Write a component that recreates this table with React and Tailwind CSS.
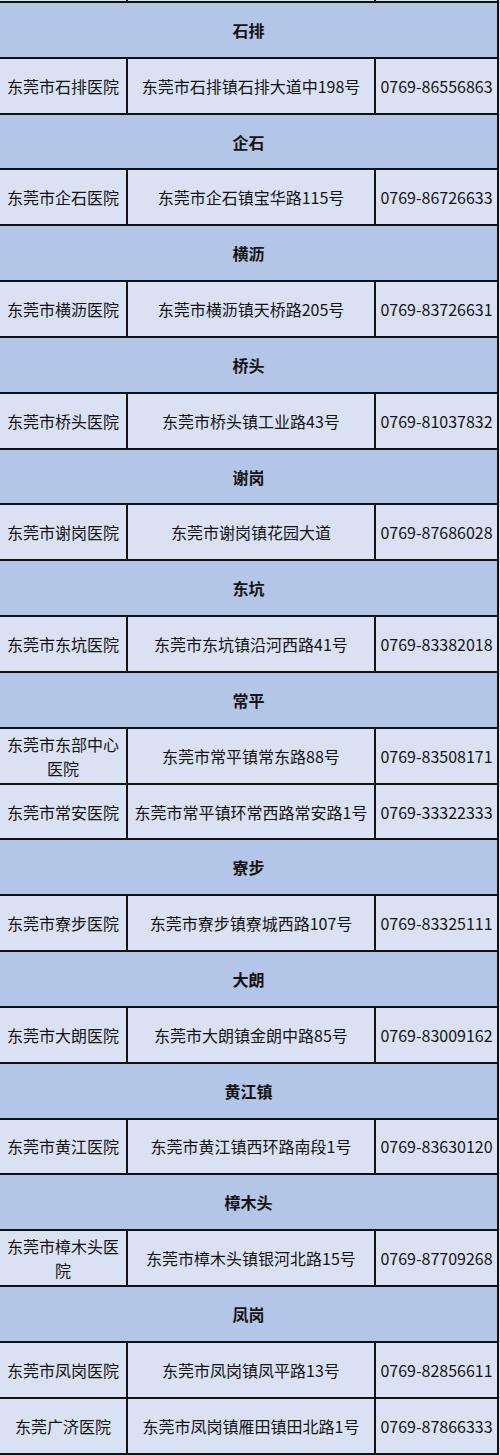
const groups = [
  { town: '石排', rows: [['东莞市石排医院', '东莞市石排镇石排大道中198号', '0769-86556863']] },
  { town: '企石', rows: [['东莞市企石医院', '东莞市企石镇宝华路115号', '0769-86726633']] },
  { town: '横沥', rows: [['东莞市横沥医院', '东莞市横沥镇天桥路205号', '0769-83726631']] },
  { town: '桥头', rows: [['东莞市桥头医院', '东莞市桥头镇工业路43号', '0769-81037832']] },
  { town: '谢岗', rows: [['东莞市谢岗医院', '东莞市谢岗镇花园大道', '0769-87686028']] },
  { town: '东坑', rows: [['东莞市东坑医院', '东莞市东坑镇沿河西路41号', '0769-83382018']] },
  {
    town: '常平',
    rows: [
      ['东莞市东部中心医院', '东莞市常平镇常东路88号', '0769-83508171'],
      ['东莞市常安医院', '东莞市常平镇环常西路常安路1号', '0769-33322333'],
    ],
  },
  { town: '寮步', rows: [['东莞市寮步医院', '东莞市寮步镇寮城西路107号', '0769-83325111']] },
  { town: '大朗', rows: [['东莞市大朗医院', '东莞市大朗镇金朗中路85号', '0769-83009162']] },
  { town: '黄江镇', rows: [['东莞市黄江医院', '东莞市黄江镇西环路南段1号', '0769-83630120']] },
  { town: '樟木头', rows: [['东莞市樟木头医院', '东莞市樟木头镇银河北路15号', '0769-87709268']] },
  {
    town: '凤岗',
    rows: [
      ['东莞市凤岗医院', '东莞市凤岗镇凤平路13号', '0769-82856611'],
      ['东莞广济医院', '东莞市凤岗镇雁田镇田北路1号', '0769-87866333'],
    ],
  },
];

const cell = 'flex items-center justify-center text-center px-1 border-r-2 border-[#111]';

function Row({ row }) {
  return (
    <div className="grid grid-cols-[128px_248px_123px] h-[55.84px] border-b-2 border-[#111] bg-[#d9e1f2]">
      <div className={cell}>{row[0]}</div>
      <div className={cell}>{row[1]}</div>
      <div className={`${cell} whitespace-nowrap`}>{row[2]}</div>
    </div>
  );
}

export default function App() {
  return (
    <div className="w-[500px] bg-[#d9e1f2] text-[16px] leading-6 text-[#141414] font-['Noto_Sans_CJK_SC','Noto_Sans',sans-serif]">
      <div className="w-[499px]">
        {/* edge of the row above, cut off */}
        <div className="grid grid-cols-[128px_248px_123px] h-[3px] border-b-2 border-[#111] bg-[#d9e1f2]">
          <div className="border-r-2 border-[#111]" />
          <div className="border-r-2 border-[#111]" />
          <div className="border-r-2 border-[#111]" />
        </div>
        {groups.map((g) => (
          <div key={g.town}>
            <div className="flex items-center justify-center h-[55.84px] border-b-2 border-r-2 border-[#111] bg-[#b4c6e7] font-bold">
              {g.town}
            </div>
            {g.rows.map((r) => (
              <Row key={r[0]} row={r} />
            ))}
          </div>
        ))}
      </div>
    </div>
  );
}
